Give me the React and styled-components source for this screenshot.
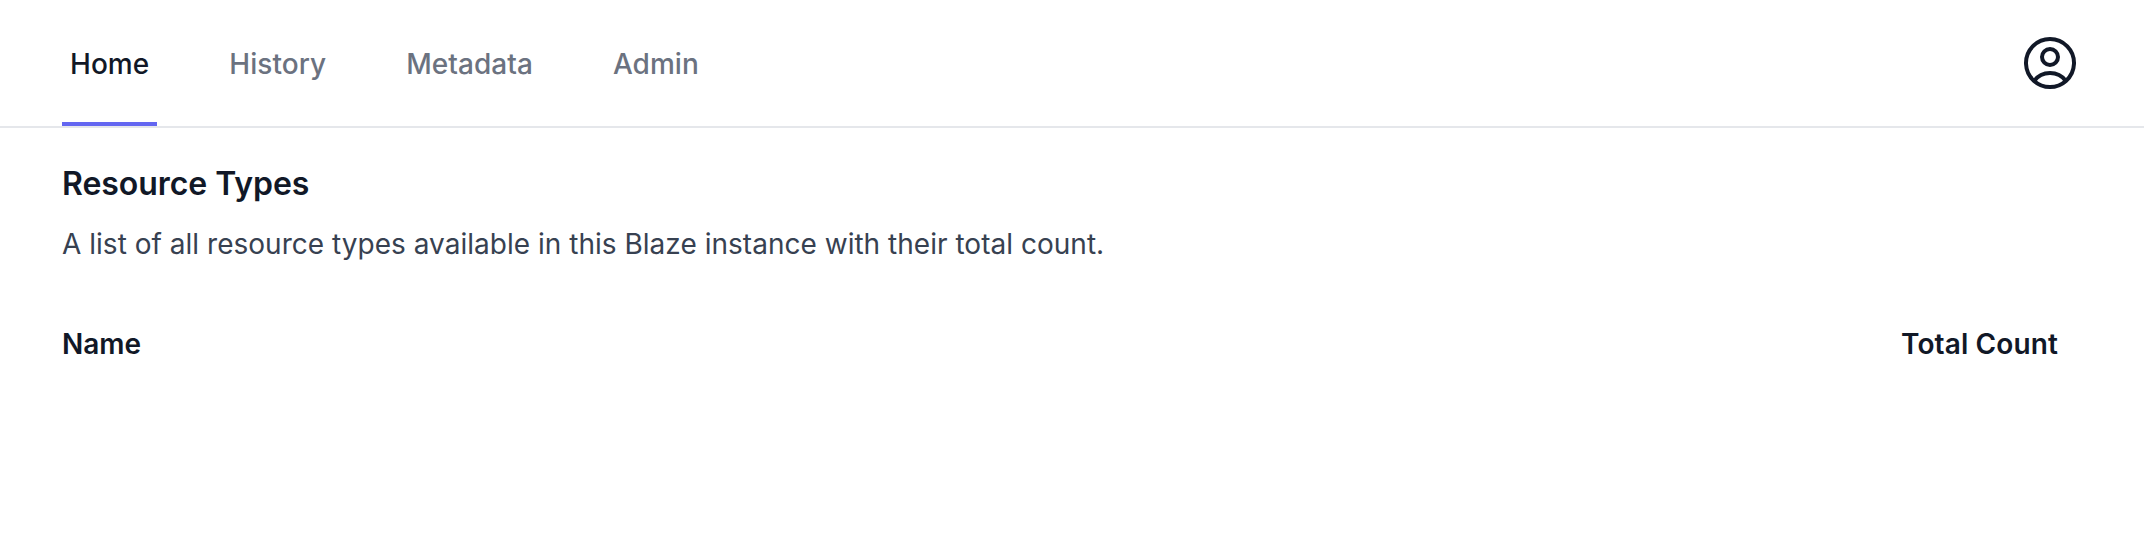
import React from "react";
import styled, { createGlobalStyle } from "styled-components";

const GlobalStyle = createGlobalStyle`
  html, body {
    margin: 0;
    background: #fff;
    font-family: Inter, "Liberation Sans", sans-serif;
  }
`;

const Header = styled.header`
  box-sizing: border-box;
  height: 128px;
  padding: 0 62px;
  display: flex;
  justify-content: space-between;
  align-items: stretch;
  border-bottom: 2px solid #e5e7eb;
`;

const Tabs = styled.nav`
  display: flex;
  gap: 64px;
`;

const Tab = styled.a`
  box-sizing: border-box;
  display: flex;
  align-items: center;
  padding: 6px 8px 0;
  font-size: 28px;
  font-weight: 500;
  line-height: 40px;
  letter-spacing: 0.05px;
  color: ${(p) => (p.$active ? "#111827" : "#6b7280")};
  border-bottom: 4px solid ${(p) => (p.$active ? "#6366f1" : "transparent")};
`;

const Profile = styled.div`
  display: flex;
  align-items: center;
  color: #111827;
`;

const Main = styled.main`
  padding: 32px 62px 0;
`;

const Title = styled.h1`
  margin: 0;
  font-size: 32px;
  font-weight: 600;
  line-height: 48px;
  letter-spacing: -0.05px;
  color: #111827;
`;

const Description = styled.p`
  margin: 16px 0 0;
  font-size: 28px;
  line-height: 40px;
  letter-spacing: 0.02px;
  color: #374151;
`;

const Table = styled.table`
  width: 100%;
  margin-top: 32px;
  border-collapse: collapse;
`;

const HeadCell = styled.th`
  padding: 28px ${(p) => (p.$right ? "24px" : "0")} 28px 0;
  font-size: 28px;
  font-weight: 600;
  line-height: 40px;
  letter-spacing: ${(p) => (p.$right ? "0.12px" : "0")};
  color: #111827;
  text-align: ${(p) => (p.$right ? "right" : "left")};
`;

const UserCircle = () => (
  <svg width="64" height="64" viewBox="0 0 24 24" fill="none" stroke="currentColor" strokeWidth="1.5">
    <path
      strokeLinecap="round"
      strokeLinejoin="round"
      d="M17.982 18.725A7.488 7.488 0 0012 15.75a7.488 7.488 0 00-5.982 2.975m11.964 0a9 9 0 10-11.963 0m11.963 0A8.966 8.966 0 0112 21a8.966 8.966 0 01-5.982-2.275M15 9.75a3 3 0 11-6 0 3 3 0 016 0z"
    />
  </svg>
);

export default function App() {
  return (
    <>
      <GlobalStyle />
      <Header>
        <Tabs>
          <Tab $active>Home</Tab>
          <Tab>History</Tab>
          <Tab>Metadata</Tab>
          <Tab>Admin</Tab>
        </Tabs>
        <Profile>
          <UserCircle />
        </Profile>
      </Header>
      <Main>
        <Title>Resource Types</Title>
        <Description>A list of all resource types available in this Blaze instance with their total count.</Description>
        <Table>
          <thead>
            <tr>
              <HeadCell>Name</HeadCell>
              <HeadCell $right>Total Count</HeadCell>
            </tr>
          </thead>
        </Table>
      </Main>
    </>
  );
}
